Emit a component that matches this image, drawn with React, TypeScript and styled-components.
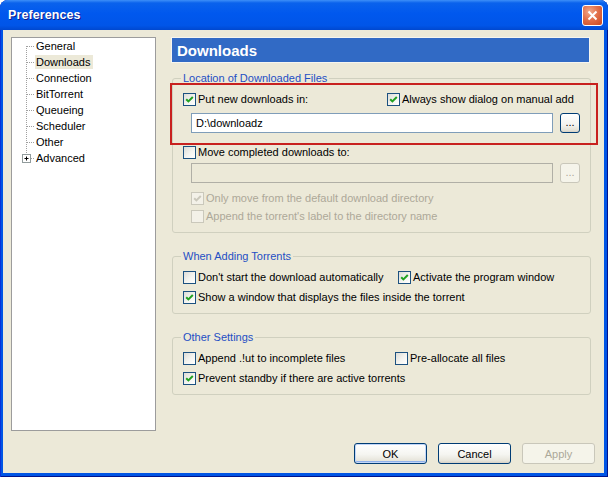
import React from "react";
import styled, { createGlobalStyle } from "styled-components";

const GlobalStyle = createGlobalStyle`
  html, body {
    margin: 0;
    padding: 0;
    background: #ffffff;
  }
  body {
    font-family: "Liberation Sans", Arial, sans-serif;
  }
`;

const UI_FONT = `"Liberation Sans", Arial, sans-serif`;

const Window = styled.div`
  width: 608px;
  height: 477px;
  display: flex;
  flex-direction: column;
  background: #0055e5;
  border-radius: 8px 8px 0 0;
  box-shadow: inset 1px 0 0 #0831d9, inset -1px 0 0 #00138c, inset 0 -1px 0 #00138c;
  overflow: hidden;
`;

const TitleBar = styled.div`
  height: 30px;
  flex: none;
  display: flex;
  align-items: center;
  justify-content: space-between;
  padding: 0 5px 0 8px;
  box-sizing: border-box;
  background: linear-gradient(
    to bottom,
    #3d8ff8 0%,
    #0a62ec 10%,
    #0058ee 45%,
    #0055e8 85%,
    #0048cf 100%
  );
`;

const Title = styled.span`
  color: #ffffff;
  font: bold 12.5px ${UI_FONT};
  text-shadow: 1px 1px 0 #0f1c8a;
  letter-spacing: 0.1px;
`;

const CloseButton = styled.div`
  width: 21px;
  height: 21px;
  box-sizing: border-box;
  margin-top: 1px;
  border: 1px solid #ffffff;
  border-radius: 3px;
  display: flex;
  align-items: center;
  justify-content: center;
  background: radial-gradient(circle at 35% 30%, #f0a98c 0%, #e2704b 45%, #c9461d 100%);
`;

const Client = styled.div`
  flex: 1;
  margin: 0 4px 4px 3px;
  padding: 7px 9px 9px 8px;
  background: #ece9d8;
  display: flex;
  flex-direction: column;
  font: 11px ${UI_FONT};
  color: #000000;
`;

const Body = styled.div`
  display: flex;
  gap: 16px;
  height: 394px;
`;

const Tree = styled.div`
  width: 145px;
  height: 394px;
  box-sizing: border-box;
  border: 1px solid #9c9c9c;
  background: #ffffff;
  display: flex;
  flex-direction: column;
`;

const TreeRow = styled.div`
  height: 16px;
  display: flex;
  align-items: center;
`;

const TreeLabel = styled.span<{ $selected?: boolean }>`
  line-height: 14px;
  padding: 0 3px 0 1px;
  white-space: nowrap;
  background: ${(p) => (p.$selected ? "#ece9d8" : "transparent")};
`;

const Content = styled.div`
  width: 419px;
  display: flex;
  flex-direction: column;
`;

const Header = styled.div`
  width: 417px;
  height: 24px;
  margin-top: 1px;
  box-sizing: border-box;
  padding-left: 5px;
  display: flex;
  align-items: center;
  background: #316ac5;
  box-shadow: 0 0 0 1px #f6f5ef;
  color: #ffffff;
  font: bold 15px ${UI_FONT};
`;

const Group = styled.fieldset<{ $top: number }>`
  margin: ${(p) => p.$top}px 0 0;
  padding: 6px 10px 8px;
  min-width: 0;
  border: 1px solid #d0d0bf;
  border-radius: 3px;
`;

const Legend = styled.legend`
  padding: 0 2px;
  margin-left: -2px;
  color: #1f4fc4;
  line-height: 13px;
`;

const Row = styled.div<{ $top?: number; $indent?: number }>`
  display: flex;
  align-items: center;
  height: 16px;
  margin-top: ${(p) => p.$top ?? 0}px;
  padding-left: ${(p) => p.$indent ?? 0}px;
`;

const Highlighted = styled.div`
  position: relative;
`;

const RedMark = styled.div`
  position: absolute;
  top: -8px;
  left: -13px;
  right: -18px;
  bottom: -12px;
  border: 2px solid #c8211f;
  pointer-events: none;
`;

const OptionWrap = styled.label<{ $w?: number; $disabled?: boolean }>`
  display: flex;
  align-items: center;
  flex: none;
  width: ${(p) => (p.$w ? `${p.$w}px` : "auto")};
  color: ${(p) => (p.$disabled ? "#aca899" : "#000000")};
  white-space: nowrap;
`;

const Box = styled.span<{ $disabled?: boolean }>`
  width: 13px;
  height: 13px;
  box-sizing: border-box;
  flex: none;
  display: flex;
  align-items: center;
  justify-content: center;
  border: 1px solid ${(p) => (p.$disabled ? "#cac8bb" : "#1c5180")};
  background: ${(p) =>
    p.$disabled
      ? "#f3f1e8"
      : "linear-gradient(135deg, #dcdcd7 0%, #f4f4f0 55%, #ffffff 100%)"};
`;

const OptionText = styled.span`
  margin-left: 2px;
  line-height: 14px;
`;

const PathRow = styled.div<{ $top: number }>`
  display: flex;
  gap: 7px;
  margin-top: ${(p) => p.$top}px;
  padding-left: 8px;
`;

const PathInput = styled.input`
  flex: 1;
  min-width: 0;
  height: 20px;
  box-sizing: border-box;
  margin: 0;
  padding: 0 4px;
  border: 1px solid #7f9db9;
  background: #ffffff;
  font: 11px ${UI_FONT};
  color: #000000;
  outline: none;

  &:disabled {
    border-color: #b0afa6;
    background: #ece9d8;
  }
`;

const BrowseButton = styled.button`
  width: 20px;
  height: 20px;
  flex: none;
  box-sizing: border-box;
  margin: 0;
  padding: 0 0 3px;
  border: 1px solid #003c74;
  border-radius: 3px;
  background: linear-gradient(to bottom, #ffffff 0%, #f3f3ef 60%, #e3e1d6 90%, #d6d0c5 100%);
  font: 11px ${UI_FONT};
  color: #000000;
  line-height: 10px;

  &:disabled {
    border-color: #c9c7ba;
    background: #f5f4ea;
    color: #aca899;
  }
`;

const Footer = styled.div`
  display: flex;
  justify-content: flex-end;
  gap: 11px;
  margin-top: 12px;
`;

const DialogButton = styled.button<{ $primary?: boolean }>`
  width: 73px;
  height: 21px;
  box-sizing: border-box;
  margin: 0;
  padding: 0;
  border: 1px solid #003c74;
  border-radius: 3px;
  background: linear-gradient(to bottom, #ffffff 0%, #f5f5f1 55%, #e6e4da 88%, #d6d0c5 100%);
  font: 11px ${UI_FONT};
  color: #000000;
  box-shadow: ${(p) =>
    p.$primary ? "inset 0 0 0 1px #c2d6f8, inset 0 -2px 0 0 #8fb0ea" : "none"};

  &:disabled {
    border-color: #c9c7ba;
    background: #f5f4ea;
    color: #aca899;
    box-shadow: none;
  }
`;

type GuideKind = "first" | "mid" | "plus";

const Guide = ({ kind }: { kind: GuideKind }) => (
  <svg width="23" height="16" viewBox="0 0 23 16" style={{ flex: "none" }}>
    <g stroke="#a0a0a0" strokeWidth="1" strokeDasharray="1 1" fill="none">
      {kind === "first" && <line x1="14.5" y1="8" x2="14.5" y2="16" />}
      {kind === "mid" && <line x1="14.5" y1="0" x2="14.5" y2="16" />}
      {kind === "plus" && <line x1="14.5" y1="0" x2="14.5" y2="4" />}
      <line x1={kind === "plus" ? 19 : 15} y1="8.5" x2="23" y2="8.5" />
    </g>
    {kind === "plus" && (
      <g>
        <rect x="10.5" y="4.5" width="8" height="8" fill="#ffffff" stroke="#919b9c" />
        <line x1="12.5" y1="8.5" x2="16.5" y2="8.5" stroke="#000000" />
        <line x1="14.5" y1="6.5" x2="14.5" y2="10.5" stroke="#000000" />
      </g>
    )}
  </svg>
);

const Check = ({ disabled }: { disabled?: boolean }) => (
  <svg width="11" height="11" viewBox="0 0 11 11">
    <path
      d="M2.2 5.2 L4.4 7.4 L8.8 3"
      stroke={disabled ? "#cac8bb" : "#21a121"}
      strokeWidth="2"
      fill="none"
    />
  </svg>
);

type OptionProps = {
  label: string;
  checked?: boolean;
  disabled?: boolean;
  width?: number;
};

const Option = ({ label, checked, disabled, width }: OptionProps) => (
  <OptionWrap $w={width} $disabled={disabled}>
    <Box $disabled={disabled}>{checked && <Check disabled={disabled} />}</Box>
    <OptionText>{label}</OptionText>
  </OptionWrap>
);

const treeItems: { label: string; kind: GuideKind; selected?: boolean }[] = [
  { label: "General", kind: "first" },
  { label: "Downloads", kind: "mid", selected: true },
  { label: "Connection", kind: "mid" },
  { label: "BitTorrent", kind: "mid" },
  { label: "Queueing", kind: "mid" },
  { label: "Scheduler", kind: "mid" },
  { label: "Other", kind: "mid" },
  { label: "Advanced", kind: "plus" },
];

const App = () => {
  return (
    <>
      <GlobalStyle />
      <Window>
        <TitleBar>
          <Title>Preferences</Title>
          <CloseButton>
            <svg width="11" height="11" viewBox="0 0 11 11">
              <path d="M1.5 1.5 L9.5 9.5 M9.5 1.5 L1.5 9.5" stroke="#ffffff" strokeWidth="2" />
            </svg>
          </CloseButton>
        </TitleBar>
        <Client>
          <Body>
            <Tree>
              {treeItems.map((item) => (
                <TreeRow key={item.label}>
                  <Guide kind={item.kind} />
                  <TreeLabel $selected={item.selected}>{item.label}</TreeLabel>
                </TreeRow>
              ))}
            </Tree>
            <Content>
              <Header>Downloads</Header>

              <Group $top={10}>
                <Legend>Location of Downloaded Files</Legend>
                <Highlighted>
                  <Row>
                    <Option width={204} checked label="Put new downloads in:" />
                    <Option checked label="Always show dialog on manual add" />
                  </Row>
                  <PathRow $top={6}>
                    <PathInput readOnly value="D:\downloadz" />
                    <BrowseButton>...</BrowseButton>
                  </PathRow>
                  <RedMark />
                </Highlighted>
                <Row $top={11}>
                  <Option label="Move completed downloads to:" />
                </Row>
                <PathRow $top={3}>
                  <PathInput disabled value="" readOnly />
                  <BrowseButton disabled>...</BrowseButton>
                </PathRow>
                <Row $top={7} $indent={8}>
                  <Option checked disabled label="Only move from the default download directory" />
                </Row>
                <Row $top={2} $indent={8}>
                  <Option disabled label="Append the torrent's label to the directory name" />
                </Row>
              </Group>

              <Group $top={17}>
                <Legend>When Adding Torrents</Legend>
                <Row>
                  <Option width={215} label="Don't start the download automatically" />
                  <Option checked label="Activate the program window" />
                </Row>
                <Row $top={4}>
                  <Option checked label="Show a window that displays the files inside the torrent" />
                </Row>
              </Group>

              <Group $top={17}>
                <Legend>Other Settings</Legend>
                <Row>
                  <Option width={212} label="Append .!ut to incomplete files" />
                  <Option label="Pre-allocate all files" />
                </Row>
                <Row $top={4}>
                  <Option checked label="Prevent standby if there are active torrents" />
                </Row>
              </Group>
            </Content>
          </Body>
          <Footer>
            <DialogButton $primary>OK</DialogButton>
            <DialogButton>Cancel</DialogButton>
            <DialogButton disabled>Apply</DialogButton>
          </Footer>
        </Client>
      </Window>
    </>
  );
};

export default App;
